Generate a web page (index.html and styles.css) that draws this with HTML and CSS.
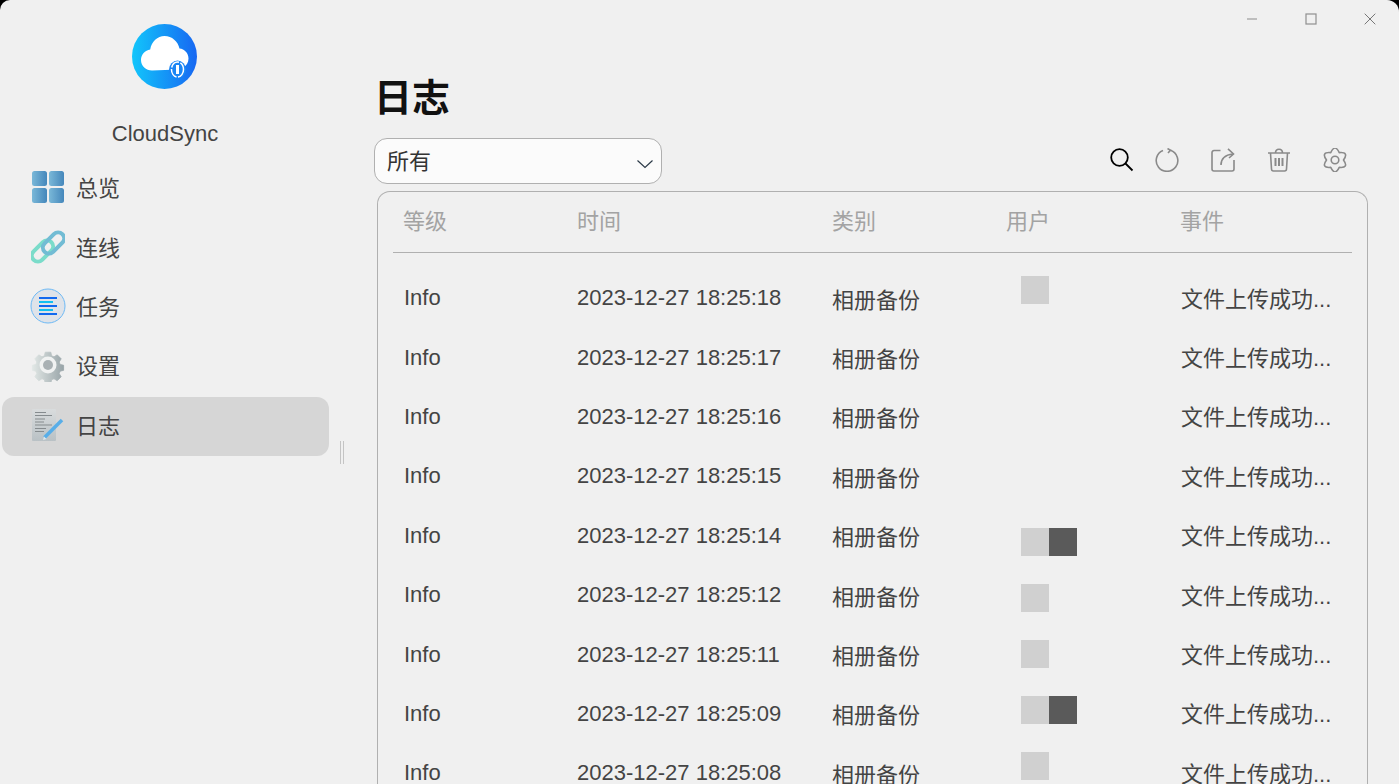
FILE: index.html
```html
<!DOCTYPE html>
<html lang="zh-CN">
<head>
    <meta charset="UTF-8">
    <meta name="viewport" content="width=device-width, initial-scale=1.0">
    <title>CloudSync - 日志</title>
    <link rel="stylesheet" href="styles.css">
</head>
<body>
    <div class="app">
        <aside class="sidebar">
            <svg class="logo" width="65" height="65" viewBox="0 0 65 65">
                <defs>
                    <linearGradient id="logo-bg" x1="0" y1="0" x2="1" y2="0">
                        <stop offset="0" stop-color="#12c6fb"/>
                        <stop offset="1" stop-color="#1767f2"/>
                    </linearGradient>
                </defs>
                <circle cx="32.5" cy="32.5" r="32.5" fill="url(#logo-bg)"/>
                <path d="M20 46.500c-6 0-11-4.400-11-10.500 0-5.500 4-9.800 9.200-10.500C19.500 17.500 25.500 12 32.500 12c7.500 0 13.500 5.500 15 12.500 5 .5 9 4.500 9 10 0 4-2 7-5 9-2 1.500-4 2-6 2z" fill="#fff"/>
                <ellipse cx="45.500" cy="45.500" rx="8.500" ry="9" fill="#1a86f5"/>
                <ellipse cx="45.500" cy="45.500" rx="6" ry="7.500" fill="none" stroke="#fff" stroke-width="1.500" stroke-dasharray="10 1.500"/>
                <rect x="44" y="41" width="3" height="9" fill="#fff"/>
            </svg>
            <div class="app-name">CloudSync</div>
            <nav class="nav">
                <div class="nav-item">
                    <svg class="nav-icon" width="34" height="34" viewBox="0 0 34 34">
                        <defs>
                            <linearGradient id="tile" x1="0" y1="0" x2="1" y2="0">
                                <stop offset="0" stop-color="#7ab8d8"/>
                                <stop offset="1" stop-color="#4587bb"/>
                            </linearGradient>
                        </defs>
                        <g fill="url(#tile)">
                            <rect x="1" y="1" width="15" height="15" rx="2.500"/>
                            <rect x="18" y="1" width="15" height="15" rx="2.500"/>
                            <rect x="1" y="18" width="15" height="15" rx="2.500"/>
                            <rect x="18" y="18" width="15" height="15" rx="2.500"/>
                        </g>
                    </svg>
                    <span>总览</span>
                </div>
                <div class="nav-item">
                    <svg class="nav-icon" width="34" height="34" viewBox="0 0 34 34">
                        <g fill="none" stroke-width="4">
                            <rect x="-1" y="15" width="25" height="12" rx="6" transform="rotate(-45 11.500 21)" stroke="#7bdcca"/>
                            <rect x="10" y="7" width="25" height="12" rx="6" transform="rotate(-45 22.500 13)" stroke="#72bcd4"/>
                        </g>
                    </svg>
                    <span>连线</span>
                </div>
                <div class="nav-item">
                    <svg class="nav-icon wide" width="36" height="36" viewBox="0 0 36 36">
                        <circle cx="18" cy="18" r="17" fill="#dfe3e9" stroke="#6db9f5"/>
                        <path d="M9 10h18M9 18h18M9 26h18" stroke="#1269ef" stroke-width="2.200"/>
                        <path d="M9 14h14M9 22h14" stroke="#12c0f0" stroke-width="2.200"/>
                    </svg>
                    <span>任务</span>
                </div>
                <div class="nav-item">
                    <svg class="nav-icon" width="34" height="34" viewBox="0 0 34 34">
                        <defs>
                            <linearGradient id="gear" x1="0" y1="0" x2="1" y2="0">
                                <stop offset="0" stop-color="#e2e8e6"/>
                                <stop offset="1" stop-color="#98a4a8"/>
                            </linearGradient>
                        </defs>
                        <path d="M13.500 1h7l1 4.500 3 1.300 4-2.500 5 5-2.500 4 1.200 3 4.300 1v6.400l-4.300 1-1.200 3 2.500 4-5 5-4-2.500-3 1.200-1 4.600h-7l-1-4.600-3-1.200-4 2.500-5-5 2.500-4-1.200-3-4.300-1v-6.400l4.300-1 1.200-3-2.500-4 5-5 4 2.500 3-1.300z" transform="translate(3.400 3.400) scale(.8)" fill="url(#gear)" stroke="url(#gear)" stroke-linejoin="round"/>
                        <circle cx="17" cy="17" r="8.500" fill="#f0f2f2"/>
                        <circle cx="17" cy="17" r="5" fill="#a9b1b4"/>
                    </svg>
                    <span>设置</span>
                </div>
                <div class="nav-item active">
                    <svg class="nav-icon" width="34" height="34" viewBox="0 0 34 34">
                        <defs>
                            <linearGradient id="sheet" x1="0" y1="0" x2="0" y2="1">
                                <stop offset="0" stop-color="#d9dcdd"/>
                                <stop offset="1" stop-color="#b9c1c5"/>
                            </linearGradient>
                        </defs>
                        <rect x="1" y="1" width="24" height="32" rx="1" fill="url(#sheet)"/>
                        <path d="M4 4.500h11M4 7.500h17M4 11h10M4 14h9M4 17h17M4 20.500h11M4 23.500h9" stroke="#858b8e" stroke-width="1.100"/>
                        <path d="M13.500 29.500L31 12" stroke="#58aee8" stroke-width="3.500"/>
                        <path d="M12 32l1-3.500 2.500 2.500z" fill="#dce9f0"/>
                    </svg>
                    <span>日志</span>
                </div>
            </nav>
            <div class="splitter"></div>
        </aside>

        <main class="content">
            <div class="window-controls">
                <svg width="12" height="12" viewBox="0 0 12 12"><path d="M1 6h10" stroke="#a8a8a8" stroke-width="1.400"/></svg>
                <svg width="12" height="12" viewBox="0 0 12 12"><rect x="1" y="1" width="10" height="10" fill="none" stroke="#8f8f8f" stroke-width="1.200"/></svg>
                <svg width="12" height="12" viewBox="0 0 12 12"><path d="M.7.7l10.600 10.600M11.300.7L.7 11.300" stroke="#777" stroke-width="1"/></svg>
            </div>
            <h1 class="page-title">日志</h1>
            <div class="toolbar">
                <div class="level-select">
                    <span>所有</span>
                    <svg width="18" height="10" viewBox="0 0 18 10"><path d="M1.500 1.500L9 8.500l7.500-7" fill="none" stroke="#2c3a48" stroke-width="1.200"/></svg>
                </div>
                <div class="tool-icons">
                    <svg class="search-icon" width="24" height="24" viewBox="0 0 24 24"><circle cx="9.500" cy="9.500" r="8.300" fill="none" stroke="#000" stroke-width="1.800"/><path d="M15.500 15.500l7 7" stroke="#000" stroke-width="1.800"/></svg>
                    <svg width="24" height="24" viewBox="0 0 24 24" fill="none" stroke="#8a8a8a" stroke-width="1.600"><path d="M15.500 2.300a10.800 10.800 0 1 1-7.500.2"/><path d="M12.500 .5l3 1.800-2.500 2.700"/></svg>
                    <svg width="24" height="24" viewBox="0 0 24 24" fill="none" stroke="#8a8a8a" stroke-width="1.600"><path d="M9.500 2.500H3a2 2 0 0 0-2 2V21a2 2 0 0 0 2 2h18a2 2 0 0 0 2-2v-9"/><path d="M10 17c0-6 3-10 12-11"/><path d="M17 .8L22.500 6 18 10"/></svg>
                    <svg width="24" height="24" viewBox="0 0 24 24" fill="none" stroke="#8a8a8a" stroke-width="1.600"><path d="M1 5h22M8.500 5c0-5 7-5 7 0M3.500 5l1 16a2 2 0 0 0 2 2h11a2 2 0 0 0 2-2l1-16"/><path d="M8.500 10v8M12 10v8M15.500 10v8" stroke-width="2"/></svg>
                    <svg width="24" height="24" viewBox="0 0 24 24" fill="none" stroke="#8a8a8a" stroke-width="1.600"><path d="M7.750 4.640Q12-4.500 16.250 4.640 26.300 3.750 20.500 12 26.300 20.250 16.250 19.360 12 28.500 7.750 19.360-2.300 20.250 3.500 12-2.300 3.750 7.750 4.640z" stroke-linejoin="round"/><circle cx="12" cy="12" r="3.800"/></svg>
                </div>
            </div>
            <section class="log-card">
                <div class="log-row log-head">
                    <div>等级</div><div>时间</div><div>类别</div><div>用户</div><div>事件</div>
                </div>
                <div class="log-body">
                    <div class="log-row"><div class="lvl">Info</div><div>2023-12-27 18:25:18</div><div class="cjk">相册备份</div><div></div><div class="evt">文件上传成功...</div></div>
                    <div class="log-row"><div class="lvl">Info</div><div>2023-12-27 18:25:17</div><div class="cjk">相册备份</div><div></div><div class="evt">文件上传成功...</div></div>
                    <div class="log-row"><div class="lvl">Info</div><div>2023-12-27 18:25:16</div><div class="cjk">相册备份</div><div></div><div class="evt">文件上传成功...</div></div>
                    <div class="log-row"><div class="lvl">Info</div><div>2023-12-27 18:25:15</div><div class="cjk">相册备份</div><div></div><div class="evt">文件上传成功...</div></div>
                    <div class="log-row"><div class="lvl">Info</div><div>2023-12-27 18:25:14</div><div class="cjk">相册备份</div><div></div><div class="evt">文件上传成功...</div></div>
                    <div class="log-row"><div class="lvl">Info</div><div>2023-12-27 18:25:12</div><div class="cjk">相册备份</div><div></div><div class="evt">文件上传成功...</div></div>
                    <div class="log-row"><div class="lvl">Info</div><div>2023-12-27 18:25:11</div><div class="cjk">相册备份</div><div></div><div class="evt">文件上传成功...</div></div>
                    <div class="log-row"><div class="lvl">Info</div><div>2023-12-27 18:25:09</div><div class="cjk">相册备份</div><div></div><div class="evt">文件上传成功...</div></div>
                    <div class="log-row"><div class="lvl">Info</div><div>2023-12-27 18:25:08</div><div class="cjk">相册备份</div><div></div><div class="evt">文件上传成功...</div></div>
                </div>
                <!-- 用户名打码 -->
                <div class="mosaic">
                    <div class="mosaic-row first"><i></i></div>
                    <div class="mosaic-row"><i></i><b></b></div>
                    <div class="mosaic-row"><i></i></div>
                    <div class="mosaic-row"><i></i></div>
                    <div class="mosaic-row"><i></i><b></b></div>
                    <div class="mosaic-row"><i></i></div>
                </div>
            </section>
        </main>
    </div>
</body>
</html>
```

FILE: styles.css
```css
html, body {
    margin: 0;
    padding: 0;
    height: 100%;
    background: #000;
    overflow: hidden;
}
body {
    font-family: "Liberation Sans", "Noto Sans CJK SC", sans-serif;
    font-size: 22px;
    color: #444;
}
.app {
    display: flex;
    height: 784px;
    background: #f0f0f0;
    border-radius: 10px 12px 0 0;
    overflow: hidden;
}
.sidebar {
    position: relative;
    width: 345px;
    flex: none;
    display: flex;
    flex-direction: column;
    align-items: center;
    padding-top: 24px;
    box-sizing: border-box;
}
.logo {
    margin-left: -16px;
}
.app-name {
    margin-top: 32px;
    margin-left: -15px;
    line-height: 26px;
}
.nav {
    align-self: stretch;
    margin-top: 12px;
    padding: 0 16px 0 2px;
    display: flex;
    flex-direction: column;
}
.nav-item {
    height: 59.4px;
    display: flex;
    align-items: center;
    border-radius: 12px;
    padding-left: 29px;
}
.nav-item span {
    margin-left: 11px;
    margin-top: -5px;
}
.nav-icon {
    flex: none;
    margin-top: -3px;
}
.nav-icon.wide {
    margin-left: -1px;
    margin-right: -1px;
}
.nav-item.active {
    background: #d6d6d6;
}
.splitter {
    position: absolute;
    left: 340px;
    top: 441px;
    width: 2px;
    height: 23px;
    border-left: 1px solid #c4c4c4;
    border-right: 1px solid #c4c4c4;
}
.content {
    position: relative;
    flex: 1;
    min-width: 0;
    padding: 0 31px 0 29px;
}
.window-controls {
    position: absolute;
    top: 13px;
    right: 23px;
    display: flex;
    gap: 47px;
}
.page-title {
    margin: 75px 0 0 0;
    padding-top: 1px;
    padding-bottom: 1px;
    font-size: 38px;
    line-height: 44px;
    font-weight: 700;
    color: #111;
}
.toolbar {
    display: flex;
    align-items: center;
    justify-content: space-between;
    margin-top: 17px;
    height: 46px;
}
.level-select {
    width: 288px;
    height: 46px;
    box-sizing: border-box;
    display: flex;
    align-items: center;
    justify-content: space-between;
    background: #fbfbfb;
    border: 1px solid #b0b0b0;
    border-radius: 13px;
    padding: 0 7px 0 12px;
    color: #333;
}
.level-select span {
    margin-top: -4px;
}
.level-select svg {
    margin-top: 6px;
}
.tool-icons {
    display: flex;
    gap: 32px;
    padding-right: 21px;
    margin-top: -2px;
}
.search-icon {
    margin-right: -11px;
}
.log-card {
    position: relative;
    margin: 7px 0 0 3px;
    height: 640px;
    box-sizing: border-box;
    border: 1px solid #b0b0b0;
    border-bottom: 0;
    border-radius: 13px 13px 0 0;
    padding: 0 15px;
    overflow: hidden;
}
.log-row {
    display: grid;
    grid-template-columns: 174px 255px 174px 174px 155px;
    height: 59.4px;
    align-items: center;
    padding-left: 10px;
    white-space: nowrap;
}
.log-head {
    height: 54px;
    padding-bottom: 6px;
    color: #a3a3a3;
    border-bottom: 1px solid #b0b0b0;
}
.log-body {
    padding-top: 15.5px;
}
.log-row .lvl {
    margin-left: 1px;
}
.log-row .cjk {
    margin-top: -1px;
}
.log-row .evt {
    margin-left: 1px;
    margin-top: -3px;
}
.mosaic {
    position: absolute;
    left: 643px;
    top: 84px;
    display: flex;
    flex-direction: column;
    gap: 28px;
}
.mosaic-row {
    display: flex;
    height: 28px;
}
.mosaic-row.first {
    margin-bottom: 196px;
}
.mosaic-row i, .mosaic-row b {
    display: block;
    width: 28px;
    height: 28px;
    background: #d0d0d0;
}
.mosaic-row b {
    background: #5a5a5a;
}
```
